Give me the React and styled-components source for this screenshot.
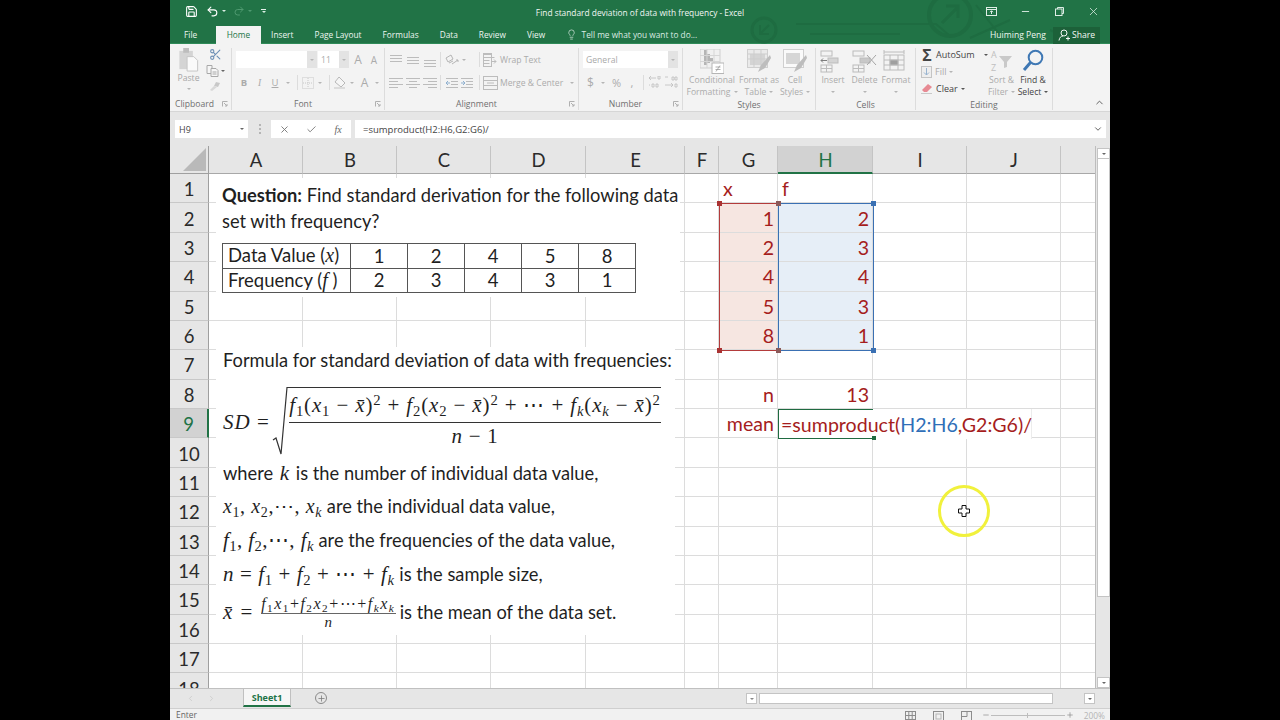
import React from "react"
import styled, { createGlobalStyle } from "styled-components"
import { Save, Undo2, Redo2, Lightbulb, X, Check, Minus, ChevronUp, ChevronDown, ChevronLeft, ChevronRight, Scissors, Plus } from "lucide-react"

const Global = createGlobalStyle`
  html, body { margin:0; padding:0; background:#000; height:720px; overflow:hidden; }
  * { box-sizing:border-box; }
  body { font-family:"Open Sans","Noto Sans",sans-serif; }
`
const Page = styled.div`
  width:1280px;
  height:720px;
  background:#000;
  display:flex;
  justify-content:center;
`
const Win = styled.div`
  width:940px;
  height:720px;
  background:#f1f1f1;
  display:flex;
  flex-direction:column;
  overflow:hidden;
`
const Head = styled.div`
  height:44px;
  flex:none;
  background:#217346;
  position:relative;
  color:#fff;
  border-bottom:1px solid #2f8a58;
`
const Pattern = styled.svg`
  position:absolute;
  left:0;
  top:0;
`
const TitleRow = styled.div`
  height:27px;
  display:flex;
  align-items:center;
  position:relative;
`
const Qat = styled.div`
  width:250px;
  display:flex;
  align-items:center;
  padding:0 0 5px 15px;
`
const QatCaret = styled.span`
  width:0;
  height:0;
  display:block;
  border-left:2px solid transparent;
  border-right:2px solid transparent;
  border-top:2px solid ${p => p.$dim ? "#4f9a70" : "#dcefe4"};
`
const QatMore = styled.span`
  width:5px;
  border-top:1px solid #e6f2eb;
  padding-top:1px;
  display:flex;
  justify-content:center;
`
const TitleText = styled.div`
  width:440px;
  text-align:center;
  font-size:8.35px;
  color:#f2f7f4;
  padding-bottom:2px;
  white-space:nowrap;
`
const WinBtns = styled.div`
  flex:1;
  display:flex;
  justify-content:flex-end;
  align-items:center;
  color:#dfeee6;
  padding-bottom:5px;
`
const WinBtn = styled.span`
  width:34px;
  display:flex;
  justify-content:center;
`
const TabRow = styled.div`
  height:17px;
  display:flex;
  align-items:flex-end;
  position:relative;
  font-size:8.3px;
`
const Tab = styled.div`
  height:${p => p.$on ? 18 : 17}px;
  padding:0 10.5px 2px;
  display:flex;
  align-items:center;
  white-space:nowrap;
  color:${p => p.$on ? "#217346" : "#eef6f1"};
  background:${p => p.$on ? "#f3f3f3" : "transparent"};
`
const FileTab = styled(Tab)`
  padding:0 19px 2px 14px;
`
const TellMe = styled.div`
  display:flex;
  align-items:center;
  gap:5px;
  margin-left:10px;
  height:17px;
  padding-bottom:2px;
  color:#dcebe3;
  white-space:nowrap;
`
const UserName = styled.div`
  margin-left:auto;
  height:17px;
  padding-bottom:2px;
  display:flex;
  align-items:center;
  color:#eef6f1;
  font-size:8.6px;
`
const ShareBtn = styled.div`
  width:47px;
  height:17px;
  margin:0 10px 0 7px;
  padding-bottom:2px;
  display:flex;
  align-items:center;
  justify-content:center;
  gap:2px;
  background:#1c6139;
  color:#f2f7f4;
  font-size:8.6px;
`

const Ribbon = styled.div`
  height:68px;
  flex:none;
  display:flex;
  padding:4px 0 1px 2px;
  background:#f3f3f3;
  border-bottom:1px solid #d6d6d6;
  font-size:8.6px;
  position:relative;
`
const Group = styled.div`
  width:${p => p.$w}px;
  display:flex;
  flex-direction:column;
  border-right:1px solid #dcdcdc;
`
const GroupBody = styled.div`
  height:51px;
  display:flex;
  flex-direction:${p => p.$col ? "column" : "row"};
  padding-left:${p => p.$pl || 0}px;
  padding-top:${p => p.$pt || 0}px;
  gap:${p => p.$gap || 0}px;
`
const GroupLabel = styled.div`
  flex:1;
  display:flex;
  align-items:center;
  justify-content:center;
  padding-top:1px;
  padding-right:${p => p.$pr || 0}px;
  color:#6f6f6f;
  position:relative;
`
const Launcher = styled.svg`
  position:absolute;
  right:3px;
  top:4px;
`
const Row = styled.div`
  display:flex;
  align-items:center;
  height:${p => p.$h || 17}px;
  color:${p => p.$dark ? "#444" : "#ababab"};
  white-space:nowrap;
`
const Slot = styled.span`
  flex:none;
  width:${p => p.$w}px;
  margin-left:${p => p.$ml || 0}px;
  display:flex;
  justify-content:center;
  align-items:center;
  color:${p => p.$c || "inherit"};
  font-size:${p => p.$fs ? p.$fs + "px" : "inherit"};
  font-weight:${p => p.$b ? 700 : 400};
  font-style:${p => p.$i ? "italic" : "normal"};
  text-decoration:${p => p.$u ? "underline" : "none"};
  font-family:${p => p.$serif ? '"Liberation Serif",serif' : "inherit"};
`
const VSep = styled.span`
  width:1px;
  height:15px;
  background:#dcdcdc;
  display:block;
`
const Caret = styled.span`
  width:0;
  height:0;
  display:block;
  border-left:2px solid transparent;
  border-right:2px solid transparent;
  border-top:2px solid ${p => p.$c || "#b5b5b5"};
  margin-left:${p => p.$ml || 0}px;
`
const Combo = styled.div`
  width:${p => p.$w}px;
  height:17px;
  flex:none;
  background:#fff;
  display:flex;
  color:#a9a9a9;
  margin-right:${p => p.$mr || 0}px;
`
const ComboText = styled.span`
  flex:1;
  padding-left:3px;
  display:flex;
  align-items:center;
`
const ComboArrow = styled.span`
  width:10px;
  background:#e3e3e3;
  display:flex;
  align-items:center;
  justify-content:center;
`
const PasteCol = styled.div`
  width:33px;
  display:flex;
  flex-direction:column;
  align-items:center;
  color:#a6a6a6;
`
const PasteCaret = styled.div`
  height:10px;
  display:flex;
  align-items:center;
`
const SmallCol = styled.div`
  width:20px;
  display:flex;
  flex-direction:column;
  align-items:center;
  gap:4px;
`
const BigBtn = styled.div`
  width:${p => p.$w}px;
  flex:none;
  display:flex;
  flex-direction:column;
  align-items:center;
  color:${p => p.$dark ? "#444" : "#ababab"};
  line-height:12px;
  white-space:nowrap;
`
const BigIcon = styled.div`
  height:26px;
  display:flex;
  align-items:center;
  justify-content:center;
`
const CaretLine = styled.span`
  display:flex;
  align-items:center;
  gap:3px;
  height:12px;
`
const EditCol = styled.div`
  width:64px;
  flex:none;
  display:flex;
  flex-direction:column;
  gap:4px;
`
const EditLine = styled.div`
  height:13px;
  display:flex;
  align-items:center;
  gap:3px;
  font-size:9px;
  color:${p => p.$dark ? "#444" : "#ababab"};
`
const Collapse = styled.div`
  flex:1;
  display:flex;
  align-items:flex-end;
  justify-content:flex-end;
  padding:0 5px 2px 0;
  color:#555;
`

const FormulaArea = styled.div`
  height:34px;
  flex:none;
  background:#e6e6e6;
  display:flex;
  align-items:center;
  padding:0 4px 0 5px;
  font-size:9.5px;
  color:#444;
`
const NameBox = styled.div`
  width:73px;
  height:18px;
  background:#fff;
  display:flex;
  align-items:center;
  justify-content:space-between;
  padding:0 4px;
  font-size:9px;
`
const Grip = styled.div`
  width:23px;
  display:flex;
  flex-direction:column;
  align-items:center;
  gap:2px;
`
const GripDot = styled.i`
  width:2px;
  height:2px;
  background:#b5b5b5;
  display:block;
`
const FxBox = styled.div`
  width:80px;
  height:18px;
  background:#fff;
  display:flex;
  align-items:center;
  margin-right:4px;
  color:#777;
`
const FxLabel = styled.span`
  width:26px;
  text-align:center;
  font:italic 10px "Liberation Serif",serif;
  color:#666;
`
const FormulaInput = styled.div`
  flex:1;
  height:18px;
  background:#fff;
  display:flex;
  align-items:center;
  justify-content:space-between;
  padding:0 3px 0 8px;
`

const SheetArea = styled.div`
  height:542px;
  flex:none;
  display:flex;
  background:#e6e6e6;
`
const GridFrame = styled.div`
  width:926px;
  height:542px;
  flex:none;
  position:relative;
  overflow:hidden;
  display:grid;
  grid-template-columns:39px 94px 94px 94px 95px 99px 34px 59px 95px 94px 94px 35px;
  grid-template-rows:28px repeat(18, 29.38px);
  background:#fff;
  font-family:Lato,"Open Sans",sans-serif;
  border-right:1px solid #bdbdbd;
`
const Corner = styled.div`
  background:#e6e6e6;
  border-right:1px solid #9f9f9f;
  border-bottom:1px solid #9f9f9f;
  display:flex;
  align-items:flex-end;
  justify-content:flex-end;
  padding:0 2px 2px 0;
`
const ColHead = styled.div`
  background:${p => p.$on ? "#d2d2d2" : "#e6e6e6"};
  color:${p => p.$on ? "#217346" : "#2b2b2b"};
  border-right:1px solid #c4c4c4;
  border-bottom:${p => p.$on ? "2px solid #217346" : "1px solid #a8a8a8"};
  display:flex;
  align-items:center;
  justify-content:center;
  font-size:18.5px;
  padding:1px 0 0 1px;
`
const RowHead = styled.div`
  background:${p => p.$on ? "#d2d2d2" : "#e6e6e6"};
  color:${p => p.$on ? "#217346" : "#2b2b2b"};
  border-right:${p => p.$on ? "2px solid #217346" : "1px solid #9f9f9f"};
  border-bottom:1px solid #c8c8c8;
  display:flex;
  align-items:center;
  justify-content:center;
  font-size:18.5px;
  padding-top:2px;
`
const Cell = styled.div`
  background:${p => p.$fill || "#fff"};
  border-right:1px solid #dcdcdc;
  border-bottom:1px solid #dcdcdc;
  color:#a51d1d;
  font-size:19.6px;
  display:flex;
  align-items:center;
  justify-content:${p => p.$left ? "flex-start" : "flex-end"};
  padding:1px 3px 0 4px;
  white-space:nowrap;
`
const Floating = styled.div`
  position:absolute;
  left:${p => p.$x}px;
  top:${p => p.$y}px;
  width:${p => p.$w}px;
  height:${p => p.$h}px;
  padding-top:${p => p.$pt || 0}px;
  background:#fff;
  color:#1f1f1f;
  font-size:18.3px;
`
const TextLine = styled.div`
  height:${p => p.$h || 26}px;
  margin-bottom:${p => p.$mb || 0}px;
  display:flex;
  align-items:center;
  padding-left:${p => p.$pl || 6}px;
  white-space:pre;
`
const Strong = styled.b`
  font-weight:700;
`
const DataTable = styled.table`
  border-collapse:collapse;
  margin:9px 0 0 6px;
  table-layout:fixed;
  width:414px;
  font-size:18.5px;
`
const Td = styled.td`
  border:1px solid #555;
  height:24.5px;
  padding:0;
  text-align:center;
`
const Th = styled(Td)`
  width:128px;
  text-align:left;
  padding-left:5px;
  white-space:pre;
`
const MathRun = styled.span`
  font-family:"Liberation Serif",serif;
  font-size:${p => p.$s}px;
  letter-spacing:${p => p.$ls || 0}px;
  white-space:pre;
`
const Mi = styled.i`
  font-family:"Liberation Serif",serif;
  font-style:italic;
  font-size:${p => p.$s ? p.$s + "px" : "inherit"};
  margin:0 ${p => p.$mx || 0}px;
`
const Sb = styled.sub`
  font-style:${p => p.$i ? "italic" : "normal"};
  font-size:.7em;
  line-height:0;
  vertical-align:-0.3em;
`
const Sp = styled.sup`
  font-size:.7em;
  line-height:0;
  vertical-align:0.5em;
`
const FormulaRow = styled.div`
  display:flex;
  align-items:flex-start;
  height:87px;
  padding:14px 0 0 7px;
`
const SdLabel = styled.div`
  width:49px;
  height:48px;
  display:flex;
  align-items:flex-end;
  white-space:pre;
`
const Radical = styled.svg`
  flex:none;
  display:block;
`
const Radicand = styled.div`
  width:372px;
  border-top:1px solid #333;
  display:flex;
  flex-direction:column;
`
const Numer = styled.div`
  height:35px;
  border-bottom:1.5px solid #333;
  display:flex;
  align-items:center;
  justify-content:center;
  white-space:pre;
`
const Denom = styled.div`
  height:26px;
  display:flex;
  align-items:center;
  justify-content:center;
  white-space:pre;
`
const SmallFrac = styled.span`
  display:inline-flex;
  flex-direction:column;
  align-items:center;
  width:135px;
  margin:0 4px 0 0;
`
const SmallNum = styled.span`
  height:21px;
  width:100%;
  border-bottom:1.5px solid #666;
  display:flex;
  justify-content:center;
  align-items:center;
  white-space:pre;
`
const SmallDen = styled.span`
  height:17px;
  display:flex;
  align-items:center;
`
const RangeBox = styled.div`
  position:absolute;
  left:${p => p.$x}px;
  top:57px;
  width:${p => p.$w}px;
  height:148px;
  border:1px solid ${p => p.$c};
`
const Handle = styled.i`
  position:absolute;
  width:5px;
  height:5px;
  background:${p => p.$c};
  left:${p => p.$r ? "auto" : "-3px"};
  right:${p => p.$r ? "-3px" : "auto"};
  top:${p => p.$b ? "auto" : "-3px"};
  bottom:${p => p.$b ? "-3px" : "auto"};
`
const EditText = styled.div`
  position:absolute;
  left:608px;
  top:263px;
  height:30px;
  width:254px;
  background:#fff;
  display:flex;
  align-items:center;
  padding-left:3px;
  font-size:19.6px;
  color:#a51d1d;
  white-space:pre;
  border-right:1px solid #ececec;
`
const EditFrame = styled.div`
  position:absolute;
  left:0;
  top:0;
  width:95px;
  height:30px;
  border:1px solid #1f6b41;
  border-right:none;
`
const EditHandle = styled.i`
  position:absolute;
  left:93px;
  bottom:-2px;
  width:4px;
  height:4px;
  background:#1f6b41;
`
const Blue = styled.span`
  color:#2f6fb8;
`
const Ring = styled.div`
  position:absolute;
  left:768px;
  top:339px;
  width:52px;
  height:52px;
  border-radius:50%;
  border:3px solid #f1f13c;
  display:flex;
  align-items:center;
  justify-content:center;
`
const VScroll = styled.div`
  width:14px;
  flex:none;
  padding:2px 0 0 1px;
  display:flex;
  flex-direction:column;
  background:#e6e6e6;
`
const ScrollBtn = styled.div`
  height:11px;
  background:#fff;
  border:1px solid #c4c4c4;
  display:flex;
  align-items:center;
  justify-content:center;
  flex:none;
  width:${p => p.$w || "auto"};
  margin-right:${p => p.$mr || 0}px;
`
const Thumb = styled.div`
  height:438px;
  flex:none;
  background:#fff;
  border:1px solid #c4c4c4;
  border-top:none;
`
const Track = styled.div`
  flex:1;
`
const TabBar = styled.div`
  height:20px;
  flex:none;
  background:#e6e6e6;
  border-top:1px solid #c0c0c0;
  display:flex;
  align-items:flex-start;
  position:relative;
  font-size:9px;
`
const NavArrows = styled.div`
  width:73px;
  height:19px;
  padding-left:16px;
  gap:12px;
  display:flex;
  align-items:center;
  color:#c8c8c8;
`
const SheetTab = styled.div`
  width:48px;
  height:18px;
  background:#f6f6f6;
  border-bottom:2px solid #217346;
  border-left:1px solid #c0c0c0;
  border-right:1px solid #c0c0c0;
  color:#217346;
  font-weight:700;
  display:flex;
  align-items:center;
  justify-content:center;
`
const AddSheet = styled.div`
  width:12px;
  height:12px;
  border:1px solid #8a8a8a;
  border-radius:50%;
  margin:3px 0 0 24px;
  display:flex;
  align-items:center;
  justify-content:center;
  color:#777;
`
const HScroll = styled.div`
  margin-left:auto;
  width:349px;
  height:11px;
  margin-top:4px;
  margin-right:15px;
  display:flex;
  align-items:center;
`
const HThumb = styled.div`
  width:294px;
  height:11px;
  background:#fff;
  border:1px solid #c4c4c4;
`
const Status = styled.div`
  flex:1;
  background:#f1f1f1;
  border-top:1px solid #cfcfcf;
  display:flex;
  align-items:center;
  padding-left:6px;
  font-size:8.4px;
  color:#666;
  overflow:hidden;
`
const StatusRight = styled.div`
  margin-left:auto;
  display:flex;
  align-items:flex-start;
  height:11px;
  padding:2px 5px 0 0;
  color:#888;
`
const ViewSlot = styled.span`
  width:28px;
  display:flex;
  justify-content:center;
`
const ZoomGroup = styled.div`
  display:flex;
  align-items:center;
  height:8px;
  margin-left:1px;
`
const ZoomTrack = styled.span`
  width:74px;
  height:1px;
  background:#bdbdbd;
  margin:0 1px;
  display:flex;
  justify-content:center;
`
const ZoomTick = styled.i`
  width:1px;
  height:5px;
  margin-top:-2px;
  background:#bdbdbd;
  display:block;
`
const ZoomLabel = styled.span`
  color:#b5b5b5;
  margin-left:10px;
  line-height:9px;
`

const Lines = ({ rows, c = "#bcbcbc" }) => (
  <svg width="16" height="14" viewBox="0 0 16 14">
    {rows.map(([a, b, y], i) => <line key={i} x1={a} x2={b} y1={y} y2={y} stroke={c} />)}
  </svg>
)
const topLines = [[2, 14, 2.5], [2, 14, 5.5], [2, 14, 8.5]]
const midLines = [[2, 14, 4.5], [2, 14, 7.5], [2, 14, 10.5]]
const botLines = [[2, 14, 7.5], [2, 14, 10.5], [2, 14, 13.5]]
const leftLines = [[1, 15, 2.5], [1, 10, 5.5], [1, 15, 8.5], [1, 10, 11.5]]
const centerLines = [[1, 15, 2.5], [4, 12, 5.5], [1, 15, 8.5], [4, 12, 11.5]]
const rightLines = [[1, 15, 2.5], [6, 15, 5.5], [1, 15, 8.5], [6, 15, 11.5]]

const PasteIcon = () => (
  <svg width="20" height="24" viewBox="0 0 20 25">
    <rect x="0" y="3" width="14" height="19" fill="#d4d4d4" />
    <rect x="4" y="0" width="6" height="5" fill="#bdbdbd" />
    <path d="M8 9h7l4 4v11H8z" fill="#fafafa" stroke="#c4c4c4" />
  </svg>
)
const CopyIcon = () => (
  <svg width="13" height="12" viewBox="0 0 13 12" fill="#f6f6f6" stroke="#a8a8a8">
    <path d="M1 .5h5v8H1z" />
    <path d="M5 3.5h5l2 2v6H5z" />
    <path d="M6.5 7h4M6.5 9h4" />
  </svg>
)
const BrushIcon = () => (
  <svg width="13" height="11" viewBox="0 0 13 11">
    <path d="M7 1l4 1-2 4-4-1z" fill="#c8c8c8" />
    <path d="M5 5l3 1-5 4-2-1z" fill="#d8d8d8" />
  </svg>
)
const BorderIcon = () => (
  <svg width="12" height="12" viewBox="0 0 12 12" fill="none" stroke="#c8c8c8">
    <rect x=".5" y=".5" width="11" height="11" strokeDasharray="1 1" />
    <path d="M6 1v10M1 6h10" strokeDasharray="1 1" />
  </svg>
)
const FillIcon = () => (
  <svg width="14" height="13" viewBox="0 0 14 13">
    <path d="M6 1l6 6-4 4-6-5z" fill="#f6f6f6" stroke="#b8b8b8" />
    <rect x="1" y="11" width="11" height="2" fill="#dcdcdc" />
  </svg>
)
const OrientIcon = () => (
  <svg width="16" height="14" viewBox="0 0 16 14" fill="none" stroke="#b5b5b5">
    <path d="M2 5l5-3 2 4-5 3zM5 10l4-2M8 11l6-4M12 7l2 0 0 2" />
  </svg>
)
const WrapIcon = () => (
  <svg width="15" height="14" viewBox="0 0 15 14" fill="none" stroke="#bcbcbc">
    <path d="M.5 1.5h8M.5 4.5h11M.5 7.5h6M.5 10.5h6M9 8.5h4M11 6.5l2 2-2 2" />
    <rect x=".5" y=".5" width="8" height="13" />
  </svg>
)
const MergeIcon = () => (
  <svg width="15" height="14" viewBox="0 0 15 14" fill="none" stroke="#bcbcbc">
    <rect x=".5" y=".5" width="14" height="13" />
    <path d="M.5 4.5h14M.5 9.5h14M4 7h7" />
  </svg>
)
const IndentIcon = ({ flip }) => (
  <svg width="14" height="12" viewBox="0 0 14 12" fill="none" stroke="#bcbcbc">
    <path d="M1 1.5h12M6 4.5h7M6 7.5h7M1 10.5h12" />
    <path d={flip ? "M1 6h4M3 4l2 2-2 2" : "M1 6h4M3 4L1 6l2 2"} stroke="#8fb0cf" />
  </svg>
)
const DecimalIcon = ({ flip }) => (
  <svg width="14" height="13" viewBox="0 0 14 13" fill="none" stroke="#bdbdbd">
    <path d={flip ? "M1 1h3M8 1h2v3H8zM11 1h2v3h-2zM1 9h8M7 7l2 2-2 2M11 8h2v3h-2z" : "M1 2h7M3 0l-2 2 2 2M10 0h2v3h-2zM1 9h1M4 8h2v3H4zM8 8h2v3H8z"} strokeWidth=".8" />
  </svg>
)
const CondIcon = () => (
  <svg width="24" height="25" viewBox="0 0 24 25">
    <rect x="0" y="0" width="20" height="19" fill="#f0f0f0" stroke="#d0d0d0" />
    <path d="M4 1h3v15h-3zM7 5h3v9H7zM10 9h3v3h-3z" fill="#b5b5b5" />
    <path d="M0 6.5h20M0 12.5h20M7 0v19M14 0v19" stroke="#d6d6d6" />
    <rect x="12" y="14" width="12" height="10.5" fill="#fff" stroke="#b5b5b5" />
    <path d="M15.5 18h5M15.5 20.5h5M20 16.5l-4 6" stroke="#9a9a9a" strokeWidth=".8" />
  </svg>
)
const TableIcon = () => (
  <svg width="24" height="24" viewBox="0 0 24 24">
    <rect x=".5" y=".5" width="20" height="18" fill="#eaeaea" stroke="#cfcfcf" />
    <rect x="3" y="5" width="15" height="11" fill="#d4d4d4" />
    <path d="M.5 5h20M.5 10h20M7 .5v18M14 .5v18" stroke="#cdcdcd" />
    <path d="M23 6l-9 10-3 7 7-4 6-10z" fill="#bdbdbd" />
  </svg>
)
const StyleIcon = () => (
  <svg width="24" height="24" viewBox="0 0 24 24">
    <rect x=".5" y=".5" width="20" height="18" fill="#fafafa" stroke="#cfcfcf" />
    <rect x="3" y="4" width="14" height="11" fill="#d6d6d6" />
    <path d="M23 6l-9 10-3 7 7-4 6-10z" fill="#bdbdbd" />
  </svg>
)
const CellsIcon = ({ kind }) => (
  <svg width="26" height="23" viewBox="0 0 26 23" fill="none" stroke="#bcbcbc">
    {kind === "format" ? (
      <g>
        <path d="M1 2h20M1 0v4M21 0v4" />
        <rect x="1" y="5" width="20" height="15" />
        <path d="M7 5v15M15 5v15M1 10h20M1 15h20" />
        <rect x="7" y="10" width="8" height="5" fill="#9f9f9f" />
      </g>
    ) : (
      <g>
        <rect x="1" y="1" width="11" height="5" />
        <rect x="1" y="15" width="11" height="7" />
        <path d="M6.5 15v7M1 18.500h11" />
        <rect x="8" y="8" width="10" height="5" fill={kind === "delete" ? "#c8c8c8" : "#d4d4d4"} />
        {kind === "delete"
          ? <path d="M15 5l9 10M24 5l-9 10" stroke="#a5a5a5" />
          : <path d="M1 10.5h6M3 8.5l-2 2 2 2" stroke="#7d7d7d" />}
      </g>
    )}
  </svg>
)
const FillDown = () => (
  <svg width="11" height="12" viewBox="0 0 11 12">
    <rect x=".5" y=".5" width="10" height="11" fill="#eee" stroke="#c4c4c4" />
    <path d="M5.5 2v7M3 6.5l2.5 2.5L8 6.5" fill="none" stroke="#98b4d0" />
  </svg>
)
const Eraser = () => (
  <svg width="12" height="11" viewBox="0 0 12 11">
    <path d="M7 1l4 3-5 5H3L1 7z" fill="#e78a93" />
    <path d="M0 10.5h11" stroke="#c9c9c9" />
  </svg>
)
const SortIcon = () => (
  <svg width="23" height="24" viewBox="0 0 23 24">
    <text x="1" y="9" fontSize="9" fill="#c0c0c0" fontFamily="Open Sans">A</text>
    <text x="1" y="22" fontSize="9" fill="#c0c0c0" fontFamily="Open Sans">Z</text>
    <path d="M9 7h13l-5 6v5l-3 1v-6z" fill="#c9c9c9" />
  </svg>
)
const Lens = () => (
  <svg width="22" height="24" viewBox="0 0 22 24" fill="none">
    <circle cx="13.5" cy="8.5" r="6.8" stroke="#3f78b4" strokeWidth="2" />
    <path d="M8.5 13.5L2 21" stroke="#3f78b4" strokeWidth="3" />
  </svg>
)
const LauncherMark = () => (
  <Launcher width="6" height="6" viewBox="0 0 6 6" fill="none" stroke="#b0b0b0">
    <path d="M.5 5.5v-5h5M2 2l3 3M5 3v2H3" />
  </Launcher>
)
const RibbonDisplay = () => (
  <svg width="11" height="9" viewBox="0 0 11 9" fill="none" stroke="#dfeee6">
    <rect x=".5" y=".5" width="10" height="8" />
    <path d="M.5 2.5h10M5.5 7V4M4 5.2l1.5-1.500L7 5.200" />
  </svg>
)
const Restore = () => (
  <svg width="9" height="9" viewBox="0 0 9 9" fill="none" stroke="#dfeee6">
    <rect x=".5" y="2" width="6.5" height="6.5" />
    <path d="M2.500 2V.5h6v6H7" />
  </svg>
)
const ShareUser = () => (
  <svg width="12" height="12" viewBox="0 0 12 12" fill="none" stroke="#f2f7f4">
    <circle cx="6" cy="4" r="3" />
    <path d="M1 11.500c.5-3 2-4.500 4-4.500M8 9.500h4M10 7.500v4" />
  </svg>
)
const CrossCursor = () => (
  <svg width="12" height="12" viewBox="0 0 12 12">
    <path d="M4 .5h4v3.500h3.500v4H8v3.500H4V8H.5V4H4z" fill="#fff" stroke="#111" />
  </svg>
)
const CircuitLines = () => (
  <Pattern width="940" height="44" viewBox="0 0 940 44" fill="none" stroke="#1e6c41" strokeWidth="3">
    <circle cx="594" cy="30" r="12" />
    <path d="M590 25v9h9M590 34l9-9" strokeWidth="2" />
    <path d="M626 24h140l14 12M640 34h90M840 20l-40 18" strokeWidth="2" />
    <circle cx="780" cy="15" r="21" strokeWidth="4" />
    <path d="M772 23l16-16M776 6h12v12" />
    <path d="M806 5l24 30M880 30l30 14" strokeWidth="2" />
  </Pattern>
)
const GridView = () => (
  <svg width="11" height="12" viewBox="0 0 11 12" fill="none" stroke="#8d8d8d">
    <path d="M.5 0v12M3.800 0v12M7.200 0v12M10.500 0v12M0 .5h11M0 4.500h11M0 8.500h11" />
  </svg>
)
const PageView = () => (
  <svg width="11" height="12" viewBox="0 0 11 12" fill="none" stroke="#8d8d8d">
    <rect x=".5" y=".5" width="10" height="12" />
    <rect x="3" y="3" width="5" height="5" stroke="#b5b5b5" />
  </svg>
)
const BreakView = () => (
  <svg width="11" height="12" viewBox="0 0 11 12" fill="none" stroke="#8d8d8d">
    <rect x=".5" y=".5" width="10" height="12" />
    <path d="M0 5.500h6M6 0v5.500" />
  </svg>
)

const colNames = ["A", "B", "C", "D", "E", "F", "G", "H", "I", "J", ""]
const gValues = ["1", "2", "4", "5", "8"]
const hValues = ["2", "3", "4", "3", "1"]

const getCell = (col, row) => {
  if (row === 1 && col === "G") return { text: "x", left: true }
  if (row === 1 && col === "H") return { text: "f", left: true }
  if (row >= 2 && row <= 6 && col === "G") return { text: gValues[row - 2], fill: "#f6e6e1" }
  if (row >= 2 && row <= 6 && col === "H") return { text: hValues[row - 2], fill: "#e6eef7" }
  if (row === 8 && col === "G") return { text: "n" }
  if (row === 8 && col === "H") return { text: "13" }
  if (row === 9 && col === "G") return { text: "mean" }
  return { text: "" }
}

const XBar = () => <Mi>x̄</Mi>
const Term = ({ i, it }) => (
  <>
    <Mi>f</Mi><Sb $i={it}>{i}</Sb>(<Mi>x</Mi><Sb $i={it}>{i}</Sb> − <XBar />)<Sp>2</Sp>
  </>
)

const Clipboard = () => (
  <Group $w={60}>
    <GroupBody>
      <PasteCol>
        <PasteIcon />
        <span>Paste</span>
        <PasteCaret><Caret /></PasteCaret>
      </PasteCol>
      <SmallCol>
        <Scissors size={13} color="#6d8fb5" />
        <Row $h={12}><CopyIcon /><Caret $ml={2} $c="#666" /></Row>
        <BrushIcon />
      </SmallCol>
    </GroupBody>
    <GroupLabel $pr={14}>Clipboard<LauncherMark /></GroupLabel>
  </Group>
)

const FontGroup = () => (
  <Group $w={153}>
    <GroupBody $col $pl={4} $pt={3} $gap={6}>
      <Row>
        <Combo $w={81} $mr={1}><ComboText /><ComboArrow><Caret /></ComboArrow></Combo>
        <Combo $w={31}><ComboText>11</ComboText><ComboArrow><Caret /></ComboArrow></Combo>
        <Slot $w={18} $fs={12}>A</Slot>
        <Slot $w={14} $fs={10}>A</Slot>
      </Row>
      <Row>
        <Slot $w={16} $b $fs={9.5}>B</Slot>
        <Slot $w={15} $i $fs={9.5} $serif>I</Slot>
        <Slot $w={16} $u $fs={9.5}>U</Slot>
        <Slot $w={9}><Caret /></Slot>
        <Slot $w={10}><VSep /></Slot>
        <Slot $w={12}><BorderIcon /></Slot>
        <Slot $w={11}><Caret /></Slot>
        <Slot $w={8}><VSep /></Slot>
        <Slot $w={14}><FillIcon /></Slot>
        <Slot $w={10}><Caret /></Slot>
        <Slot $w={15} $fs={12}>A</Slot>
        <Slot $w={10}><Caret /></Slot>
      </Row>
    </GroupBody>
    <GroupLabel $pr={10}>Font<LauncherMark /></GroupLabel>
  </Group>
)

const Alignment = () => (
  <Group $w={194}>
    <GroupBody $col $pl={3} $pt={3} $gap={6}>
      <Row>
        <Slot $w={16}><Lines rows={topLines} /></Slot>
        <Slot $w={17}><Lines rows={midLines} /></Slot>
        <Slot $w={17}><Lines rows={botLines} /></Slot>
        <Slot $w={5}><VSep /></Slot>
        <Slot $w={18}><OrientIcon /></Slot>
        <Slot $w={6}><Caret /></Slot>
        <Slot $w={2} $ml={11}><VSep /></Slot>
        <Slot $w={20}><WrapIcon /></Slot>
        <span>Wrap Text</span>
      </Row>
      <Row>
        <Slot $w={16}><Lines rows={leftLines} /></Slot>
        <Slot $w={17}><Lines rows={centerLines} /></Slot>
        <Slot $w={17}><Lines rows={rightLines} /></Slot>
        <Slot $w={5}><VSep /></Slot>
        <Slot $w={17}><IndentIcon /></Slot>
        <Slot $w={14}><IndentIcon flip /></Slot>
        <Slot $w={2} $ml={4}><VSep /></Slot>
        <Slot $w={20}><MergeIcon /></Slot>
        <span>Merge &amp; Center</span>
        <Caret $ml={7} />
      </Row>
    </GroupBody>
    <GroupLabel $pr={10}>Alignment<LauncherMark /></GroupLabel>
  </Group>
)

const NumberGroup = () => (
  <Group $w={104}>
    <GroupBody $col $pl={4} $pt={3} $gap={6}>
      <Row><Combo $w={95}><ComboText>General</ComboText><ComboArrow><Caret /></ComboArrow></Combo></Row>
      <Row>
        <Slot $w={15} $fs={12}>$</Slot>
        <Slot $w={10}><Caret /></Slot>
        <Slot $w={17} $fs={11}>%</Slot>
        <Slot $w={14} $fs={11}>,</Slot>
        <Slot $w={8}><VSep /></Slot>
        <Slot $w={16}><DecimalIcon /></Slot>
        <Slot $w={16}><DecimalIcon flip /></Slot>
      </Row>
    </GroupBody>
    <GroupLabel $pr={10}>Number<LauncherMark /></GroupLabel>
  </Group>
)

const Styles = () => (
  <Group $w={133}>
    <GroupBody>
      <BigBtn $w={58}><BigIcon><CondIcon /></BigIcon>Conditional<CaretLine>Formatting<Caret /></CaretLine></BigBtn>
      <BigBtn $w={36}><BigIcon><TableIcon /></BigIcon>Format as<CaretLine>Table<Caret /></CaretLine></BigBtn>
      <BigBtn $w={36}><BigIcon><StyleIcon /></BigIcon>Cell<CaretLine>Styles<Caret /></CaretLine></BigBtn>
    </GroupBody>
    <GroupLabel>Styles</GroupLabel>
  </Group>
)

const CellsGroup = () => (
  <Group $w={100}>
    <GroupBody>
      <BigBtn $w={34}><BigIcon><CellsIcon kind="insert" /></BigIcon>Insert<CaretLine><Caret /></CaretLine></BigBtn>
      <BigBtn $w={29}><BigIcon><CellsIcon kind="delete" /></BigIcon>Delete<CaretLine><Caret /></CaretLine></BigBtn>
      <BigBtn $w={34}><BigIcon><CellsIcon kind="format" /></BigIcon>Format<CaretLine><Caret /></CaretLine></BigBtn>
    </GroupBody>
    <GroupLabel>Cells</GroupLabel>
  </Group>
)

const Editing = () => (
  <Group $w={137}>
    <GroupBody $pl={5}>
      <EditCol>
        <EditLine $dark><Slot $w={12} $fs={16} $b $c="#444">Σ</Slot>AutoSum<Caret $ml={6} $c="#555" /></EditLine>
        <EditLine><FillDown />Fill<Caret /></EditLine>
        <EditLine $dark><Eraser />Clear<Caret $c="#555" /></EditLine>
      </EditCol>
      <BigBtn $w={33}><BigIcon><SortIcon /></BigIcon>Sort &amp;<CaretLine>Filter<Caret /></CaretLine></BigBtn>
      <BigBtn $w={30} $dark><BigIcon><Lens /></BigIcon>Find &amp;<CaretLine>Select<Caret $c="#555" /></CaretLine></BigBtn>
    </GroupBody>
    <GroupLabel>Editing</GroupLabel>
  </Group>
)

export default function App() {
  return (
    <Page>
      <Global />
      <Win>
        <Head>
          <CircuitLines />
          <TitleRow>
            <Qat>
              <Slot $w={13}><Save size={13} color="#fff" strokeWidth={2} /></Slot>
              <Slot $w={13} $ml={8}><Undo2 size={13} color="#fff" strokeWidth={2} /></Slot>
              <Slot $w={4} $ml={3}><QatCaret /></Slot>
              <Slot $w={12} $ml={7}><Redo2 size={12} color="#4f9a70" strokeWidth={2} /></Slot>
              <Slot $w={4} $ml={3}><QatCaret $dim /></Slot>
              <Slot $w={5} $ml={9}><QatMore><QatCaret /></QatMore></Slot>
            </Qat>
            <TitleText>Find standard deviation of data with frequency - Excel</TitleText>
            <WinBtns>
              <WinBtn><RibbonDisplay /></WinBtn>
              <WinBtn><Minus size={11} /></WinBtn>
              <WinBtn><Restore /></WinBtn>
              <WinBtn><X size={13} strokeWidth={1.4} /></WinBtn>
            </WinBtns>
          </TitleRow>
          <TabRow>
            <FileTab>File</FileTab>
            <Tab $on>Home</Tab>
            <Tab>Insert</Tab>
            <Tab>Page Layout</Tab>
            <Tab>Formulas</Tab>
            <Tab>Data</Tab>
            <Tab>Review</Tab>
            <Tab>View</Tab>
            <TellMe><Lightbulb size={11} strokeWidth={1.5} />Tell me what you want to do...</TellMe>
            <UserName>Huiming Peng</UserName>
            <ShareBtn><ShareUser />Share</ShareBtn>
          </TabRow>
        </Head>
        <Ribbon>
          <Clipboard />
          <FontGroup />
          <Alignment />
          <NumberGroup />
          <Styles />
          <CellsGroup />
          <Editing />
          <Collapse><ChevronUp size={11} /></Collapse>
        </Ribbon>
        <FormulaArea>
          <NameBox>H9<Caret $c="#666" /></NameBox>
          <Grip><GripDot /><GripDot /><GripDot /></Grip>
          <FxBox>
            <Slot $w={27}><X size={11} /></Slot>
            <Slot $w={27}><Check size={11} /></Slot>
            <FxLabel>fx</FxLabel>
          </FxBox>
          <FormulaInput>=sumproduct(H2:H6,G2:G6)/<ChevronDown size={10} /></FormulaInput>
        </FormulaArea>
        <SheetArea>
          <GridFrame>
            <Corner>
              <svg width="23" height="23" viewBox="0 0 23 23"><path d="M23 0v23H0z" fill="#b9b9b9" /></svg>
            </Corner>
            {colNames.map((c, i) => <ColHead key={i} $on={c === "H"}>{c}</ColHead>)}
            {Array.from({ length: 18 }, (_, r) => (
              <React.Fragment key={r}>
                <RowHead $on={r === 8}>{r + 1}</RowHead>
                {colNames.map((c, i) => {
                  const cell = getCell(c, r + 1)
                  return <Cell key={i} $left={cell.left} $fill={cell.fill}>{cell.text}</Cell>
                })}
              </React.Fragment>
            ))}

            <Floating $x={46} $y={32} $w={464} $h={119} $pt={4}>
              <TextLine><Strong>Question:</Strong> Find standard derivation for the following data</TextLine>
              <TextLine>set with frequency?</TextLine>
              <DataTable>
                <tbody>
                  <tr>
                    <Th>Data Value (<Mi $s={20}>x</Mi>)</Th>
                    {gValues.map((v, i) => <Td key={i}>{v}</Td>)}
                  </tr>
                  <tr>
                    <Th>Frequency (<Mi $s={20}>f</Mi> )</Th>
                    {hValues.map((v, i) => <Td key={i}>{v}</Td>)}
                  </tr>
                </tbody>
              </DataTable>
            </Floating>

            <Floating $x={46} $y={201} $w={459} $h={288}>
              <TextLine $pl={7}>Formula for standard deviation of data with frequencies:</TextLine>
              <FormulaRow>
                <SdLabel><MathRun $s={21} $ls={1}><Mi>SD</Mi> =</MathRun></SdLabel>
                <Radical width="17" height="68" viewBox="0 0 17 68" fill="none" stroke="#333">
                  <path d="M1 53l3-2 5 16L15 .5h2" strokeWidth="1.2" />
                </Radical>
                <Radicand>
                  <Numer>
                    <MathRun $s={21} $ls={0.85}>
                      <Term i="1" /> + <Term i="2" /> + ⋯ + <Term i="k" it />
                    </MathRun>
                  </Numer>
                  <Denom><MathRun $s={21} $ls={0.7}><Mi>n</Mi> − 1</MathRun></Denom>
                </Radicand>
              </FormulaRow>
              <TextLine $pl={7} $h={26} $mb={3}>where <Mi $s={21} $mx={2}>k</Mi> is the number of individual data value,</TextLine>
              <TextLine $pl={7} $h={34}>
                <MathRun $s={20} $ls={0.6}><Mi>x</Mi><Sb>1</Sb>, <Mi>x</Mi><Sb>2</Sb>,⋯, <Mi>x</Mi><Sb $i>k</Sb></MathRun> are the individual data value,
              </TextLine>
              <TextLine $pl={7} $h={34}>
                <MathRun $s={21} $ls={0.4}><Mi>f</Mi><Sb>1</Sb>, <Mi>f</Mi><Sb>2</Sb>,⋯, <Mi>f</Mi><Sb $i>k</Sb></MathRun> are the frequencies of the data value,
              </TextLine>
              <TextLine $pl={7} $h={34}>
                <MathRun $s={21} $ls={0.6}><Mi>n</Mi> = <Mi>f</Mi><Sb>1</Sb> + <Mi>f</Mi><Sb>2</Sb> + ⋯ + <Mi>f</Mi><Sb $i>k</Sb></MathRun> is the sample size,
              </TextLine>
              <TextLine $pl={7} $h={42}>
                <MathRun $s={21} $ls={1.5}><XBar /> = </MathRun>
                <SmallFrac>
                  <SmallNum>
                    <MathRun $s={16} $ls={1.5}>
                      <Mi>f</Mi><Sb>1</Sb><Mi>x</Mi><Sb>1</Sb>+<Mi>f</Mi><Sb>2</Sb><Mi>x</Mi><Sb>2</Sb>+⋯+<Mi>f</Mi><Sb $i>k</Sb><Mi>x</Mi><Sb $i>k</Sb>
                    </MathRun>
                  </SmallNum>
                  <SmallDen><MathRun $s={15}><Mi>n</Mi></MathRun></SmallDen>
                </SmallFrac>
                is the mean of the data set.
              </TextLine>
            </Floating>

            <RangeBox $x={549} $w={60} $c="#b33b3b">
              <Handle $c="#a33" /><Handle $c="#a33" $b /><Handle $c="#a33" $r /><Handle $c="#a33" $r $b />
            </RangeBox>
            <RangeBox $x={608} $w={96} $c="#3a70b3">
              <Handle $c="#8a5a5a" /><Handle $c="#8a5a5a" $b /><Handle $c="#3a70b3" $r /><Handle $c="#3a70b3" $r $b />
            </RangeBox>

            <EditText>
              =sumproduct(<Blue>H2:H6</Blue>,G2:G6)/
              <EditFrame><EditHandle /></EditFrame>
            </EditText>

            <Ring><CrossCursor /></Ring>
          </GridFrame>
          <VScroll>
            <ScrollBtn><Caret $c="#666" /></ScrollBtn>
            <Thumb />
            <Track />
            <ScrollBtn><Caret $c="#666" /></ScrollBtn>
          </VScroll>
        </SheetArea>
        <TabBar>
          <NavArrows><ChevronLeft size={9} /><ChevronRight size={9} /></NavArrows>
          <SheetTab>Sheet1</SheetTab>
          <AddSheet><Plus size={9} /></AddSheet>
          <HScroll>
            <ScrollBtn $w="11px" $mr={2}><Caret $c="#888" /></ScrollBtn>
            <HThumb />
            <Track />
            <ScrollBtn $w="11px"><Caret $c="#666" /></ScrollBtn>
          </HScroll>
        </TabBar>
        <Status>
          Enter
          <StatusRight>
            <ViewSlot><GridView /></ViewSlot>
            <ViewSlot><PageView /></ViewSlot>
            <ViewSlot><BreakView /></ViewSlot>
            <ZoomGroup>
              <Minus size={8} />
              <ZoomTrack><ZoomTick /></ZoomTrack>
              <Plus size={8} />
            </ZoomGroup>
            <ZoomLabel>200%</ZoomLabel>
          </StatusRight>
        </Status>
      </Win>
    </Page>
  )
}
